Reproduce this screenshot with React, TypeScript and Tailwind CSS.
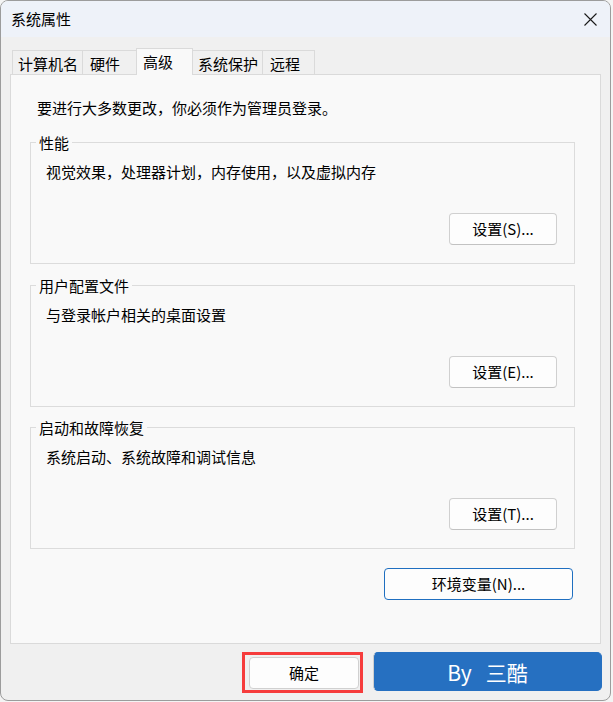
import React from "react";

const font = { fontFamily: '"Noto Sans CJK SC", "Noto Sans", sans-serif' };

type Tab = { label: string; w: string; pl: string; active?: boolean };

const tabs: Tab[] = [
  { label: "计算机名", w: "w-[71px]", pl: "pl-[5px]" },
  { label: "硬件", w: "w-[55px]", pl: "pl-[7px]" },
  { label: "高级", w: "w-[57px]", pl: "pl-[6px]", active: true },
  { label: "系统保护", w: "w-[71px]", pl: "pl-[5px]" },
  { label: "远程", w: "w-[53px]", pl: "pl-[7px]" },
];

function SettingsButton({ label }: { label: string }): JSX.Element {
  return (
    <button className="flex h-[32px] w-[108px] items-center justify-center rounded-[4px] border border-[#d0d0d0] border-b-[#c2c2c2] bg-[#fdfdfd] text-[15px] leading-[20px] text-black">
      {label}
    </button>
  );
}

function Group({ title, desc, button, className }: { title: string; desc: string; button: string; className: string }): JSX.Element {
  return (
    <div className={`flex h-[122px] w-[545px] flex-col border border-[#dcdcdc] ${className}`}>
      <span className="-mt-[10px] ml-[5px] block w-fit bg-[#f9f9f9] px-[3px] text-[15px] leading-[20px] text-black">{title}</span>
      <div className="mt-[9px] pl-[15px] text-[15px] leading-[20px] text-black">{desc}</div>
      <div className="mr-[17px] mt-[31px] flex justify-end">
        <SettingsButton label={button} />
      </div>
    </div>
  );
}

export default function App(): JSX.Element {
  return (
    <div className="h-[702px] w-[613px] bg-[#f4f4f4]" style={font}>
      <div className="flex h-[701px] w-[611px] flex-col overflow-hidden rounded-[8px] border border-[#9c9c9c] bg-[#f0f0f0]">
        {/* title bar */}
        <div className="flex h-[36px] shrink-0 items-center justify-between bg-[#eef2f9] pl-[10px] pr-[12px]">
          <span className="text-[15px] leading-[20px] text-black">系统属性</span>
          <svg width="13" height="13" viewBox="0 0 13 13" className="mr-[1px]">
            <path d="M0.5 0.5 L12.5 12.5 M12.5 0.5 L0.5 12.5" stroke="#1a1a1a" strokeWidth="1.1" fill="none" />
          </svg>
        </div>

        {/* tabs */}
        <div className="relative z-10 -mb-px ml-[11px] mt-[11px] flex items-end">
          {tabs.map((t, i) => (
            <div
              key={t.label}
              className={`${t.w} ${t.pl} ${i > 0 ? "-ml-px" : ""} box-border text-[15px] leading-[20px] text-black ${
                t.active
                  ? "relative z-10 h-[27px] border border-b-0 border-[#dadada] bg-[#f9f9f9] pt-[3px]"
                  : "h-[25px] border border-[#dadada] bg-[#f0f0f0] pt-[3px]"
              }`}
            >
              {t.label}
            </div>
          ))}
        </div>

        {/* panel */}
        <div className="ml-[9px] flex h-[570px] w-[591px] flex-col border border-[#dadada] bg-[#f9f9f9] pl-[19px] pt-[23px]">
          <div className="ml-[7px] text-[15px] leading-[20px] text-black">要进行大多数更改，你必须作为管理员登录。</div>
          <Group className="mt-[24px]" title="性能" desc="视觉效果，处理器计划，内存使用，以及虚拟内存" button="设置(S)..." />
          <Group className="mt-[21px]" title="用户配置文件" desc="与登录帐户相关的桌面设置" button="设置(E)..." />
          <Group className="mt-[20px]" title="启动和故障恢复" desc="系统启动、系统故障和调试信息" button="设置(T)..." />
          <div className="mt-[19px] flex w-[543px] justify-end">
            <button className="flex h-[32px] w-[189px] items-center justify-center rounded-[4px] border border-[#1f6fc0] bg-[#fdfdfd] text-[15px] leading-[20px] text-black">
              环境变量(N)...
            </button>
          </div>
        </div>

        {/* bottom buttons */}
        <div className="mt-[8px] flex items-start justify-end gap-[10px] pr-[8px]">
          <div className="border-[3px] border-[#f63c3c] pb-[1px] pl-[4px] pr-[1px] pt-[2px]">
            <button className="flex h-[32px] w-[110px] items-center justify-center rounded-[4px] border border-[#d0d0d0] bg-[#fdfdfd] text-[15px] leading-[20px] text-black">
              确定
            </button>
          </div>
          <div className="flex h-[39px] w-[229px] items-center justify-center gap-[14px] rounded-[5px] border border-[#2670c1] border-l-[#cfcfcf] bg-[#2670c1] text-[21px] leading-[26px] text-white">
            <span>By</span>
            <span>三酷</span>
          </div>
        </div>
      </div>
    </div>
  );
}
